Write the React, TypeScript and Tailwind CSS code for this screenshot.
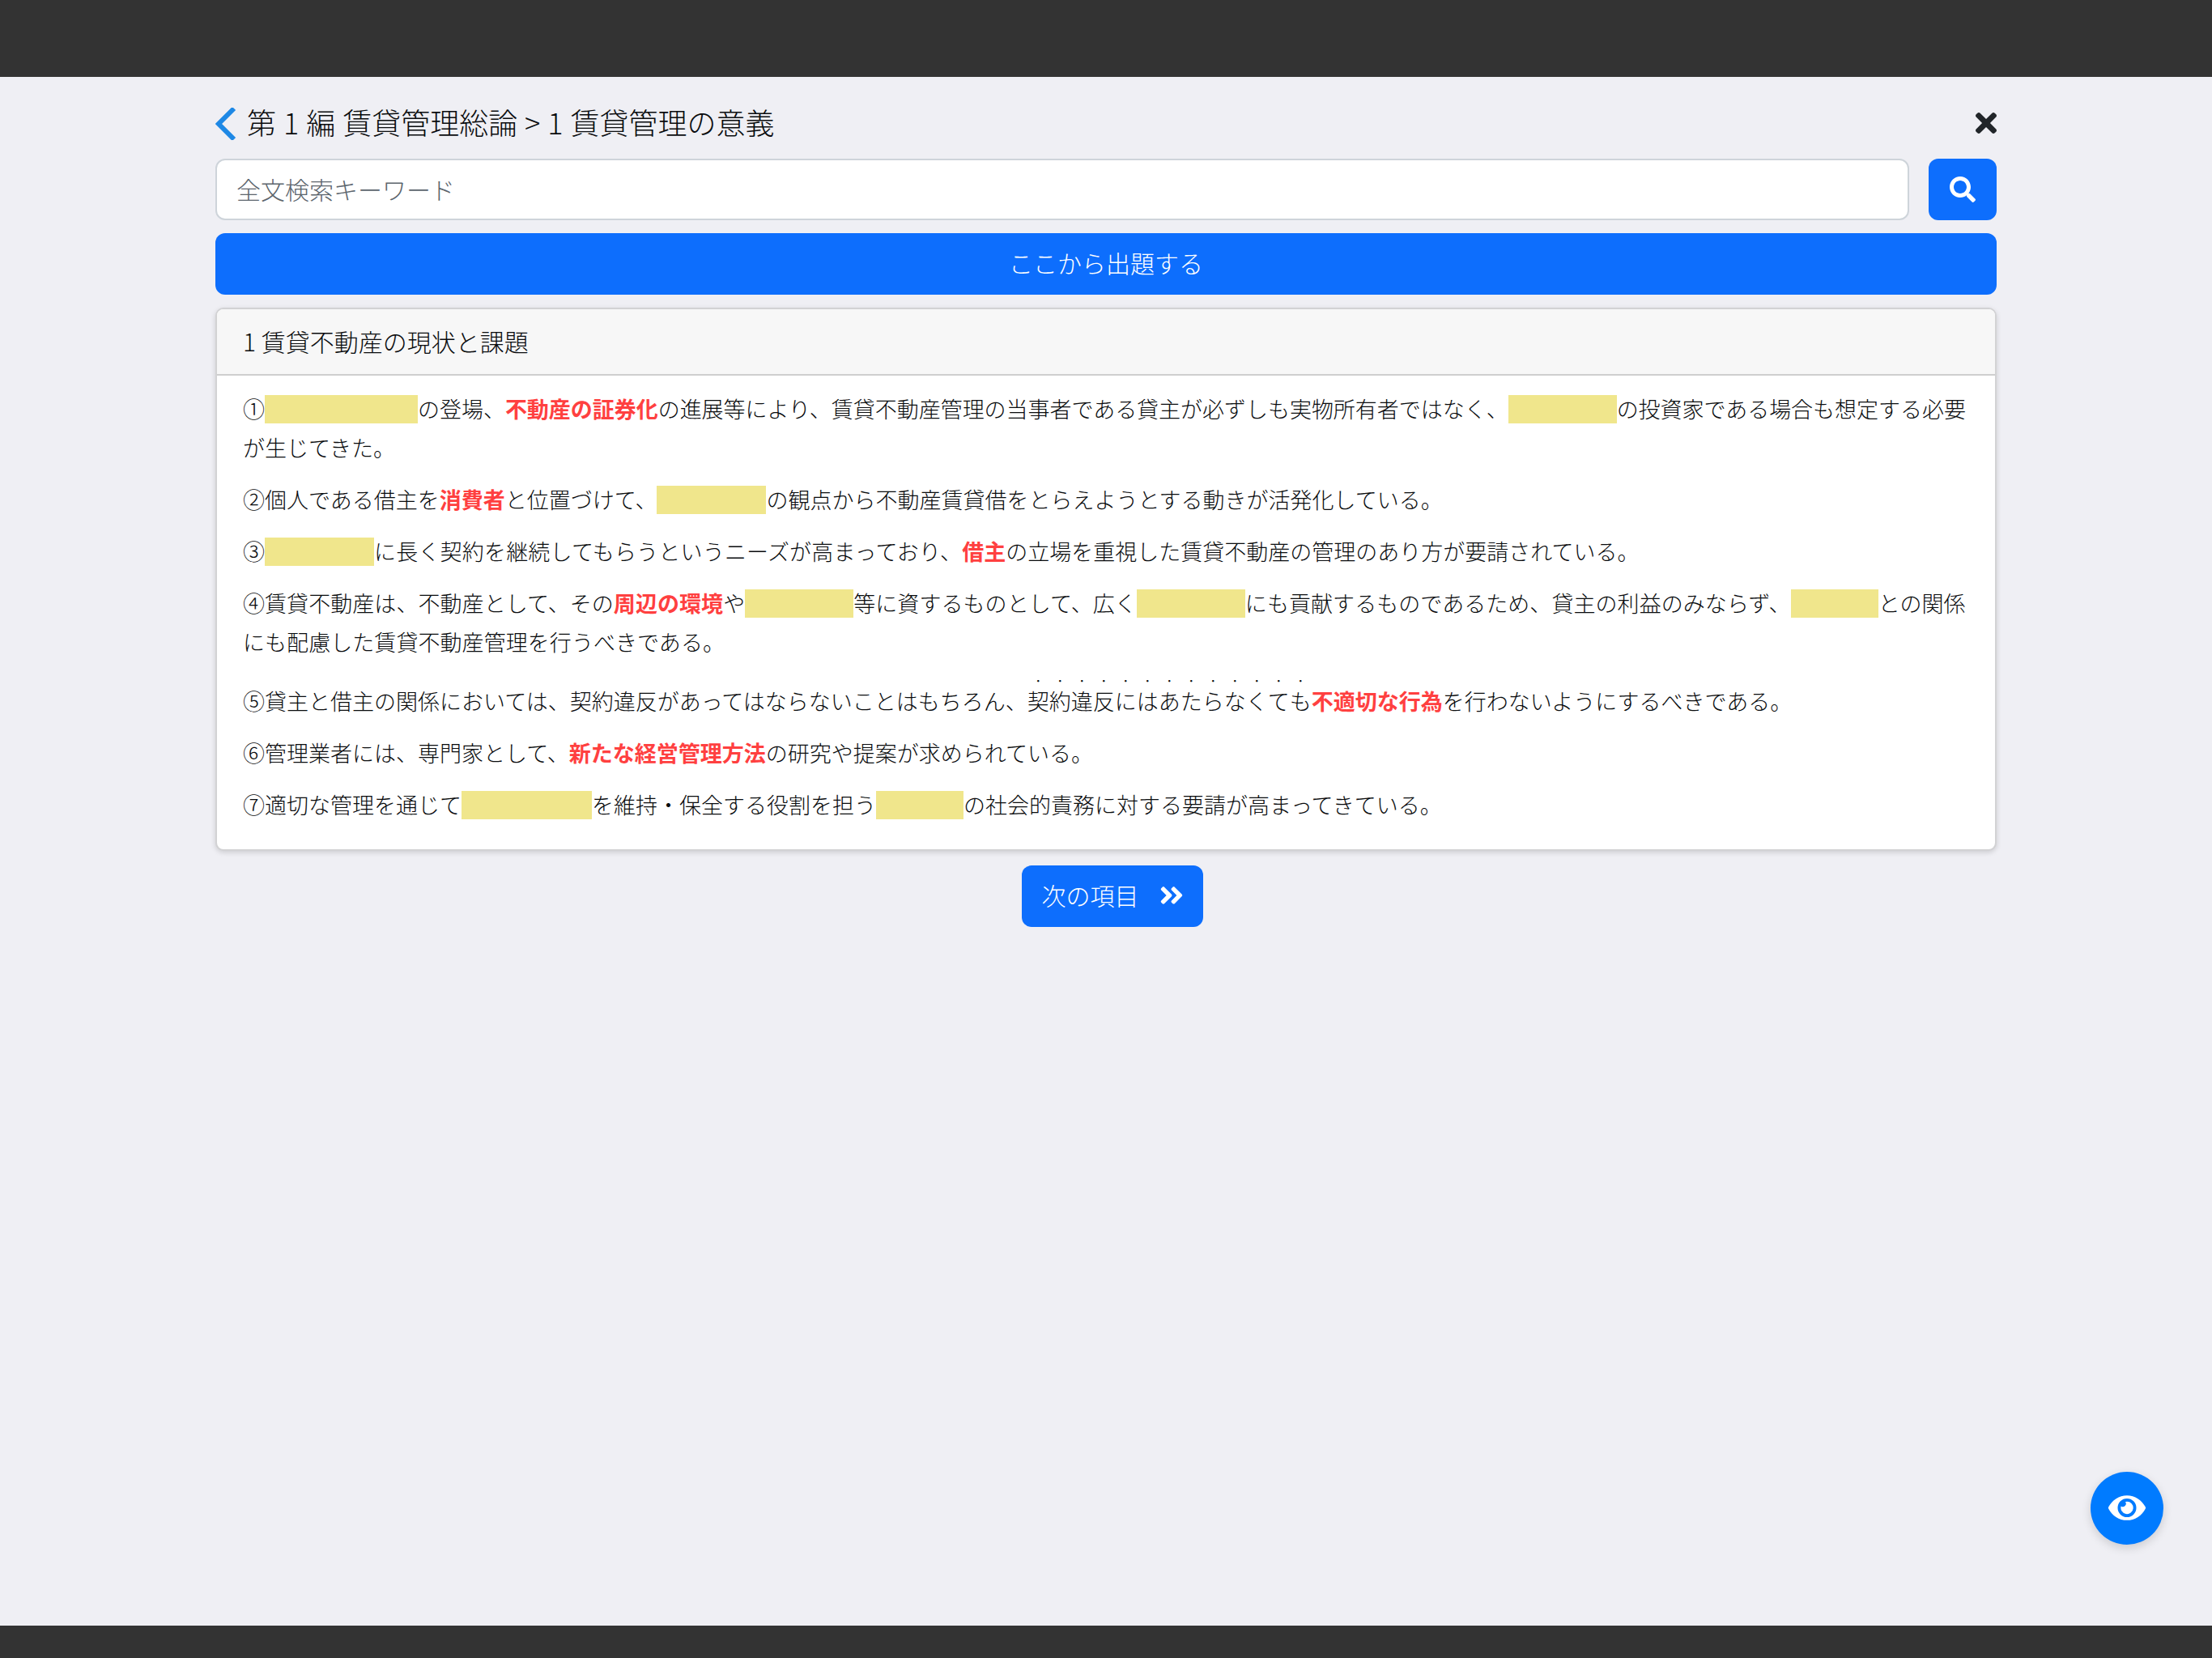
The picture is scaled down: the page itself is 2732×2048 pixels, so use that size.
import { FaAngleDoubleRight, FaEye, FaSearch, FaTimes } from "react-icons/fa";

function Blank({ w }: { w: string }) {
  return <span className={`mb-[5px] inline-block h-[35px] -translate-y-[1px] bg-[#f0e68c] align-middle ${w}`} />;
}

function Em({ children }: { children: string }) {
  return <span className="font-bold text-[#ff4040]">{children}</span>;
}

const DOTTED = "契約違反にはあたらなくても".split("");

export default function App() {
  return (
    <div className="relative flex h-screen w-full flex-col overflow-hidden bg-[#efeff4] font-['Noto_Sans_CJK_JP','Noto_Sans',sans-serif] text-[#0a0c0e]">
      <div className="h-[95px] shrink-0 bg-[#333333]" />

      <main className="mx-auto w-[2200px] flex-1 pt-[38px]">
        {/* Title */}
        <div className="mb-[23px] flex h-[40px] items-center">
          <svg width="26" height="40" viewBox="0 0 26 40" className="mr-[13px] shrink-0">
            <polyline points="23,1 4,20 23,39" fill="none" stroke="#1e88e5" strokeWidth="6" />
          </svg>
          <h1 className="flex-1 pb-[6px] text-[36px] leading-[40px] font-light [word-spacing:1px]">第 1 編 賃貸管理総論 &gt; 1 賃貸管理の意義</h1>
          <FaTimes className="mb-[3px] h-[38px] w-[26px] text-[#212529]" />
        </div>

        {/* Search */}
        <div className="flex gap-[24px]">
          <input
            placeholder="全文検索キーワード"
            className="h-[76px] flex-1 rounded-[12px] border-2 border-[#ced4da] bg-white px-[24px] pb-[3px] text-[30px] font-light outline-none placeholder:text-[#5c656d]"
          />
          <button className="flex h-[76px] w-[84px] items-center justify-center rounded-[12px] bg-[#0d6efd] text-white">
            <FaSearch className="h-[32px] w-[32px]" />
          </button>
        </div>

        <button className="mt-[16px] h-[76px] w-full rounded-[12px] bg-[#0d6efd] pb-[3px] text-[30px] font-light text-white">
          ここから出題する
        </button>

        {/* Card */}
        <section className="mt-[16px] overflow-hidden rounded-[10px] border-2 border-[#d2d2d4] bg-white shadow-[0_2px_6px_rgba(0,0,0,0.15)]">
          <div className="flex h-[82px] items-center border-b-2 border-[#cfcfcf] bg-[#f7f7f7] px-[32px] pb-[2px] text-[30px] font-light">
            1 賃貸不動産の現状と課題
          </div>
          <div className="px-[32px] pt-[17px] pb-[15px] text-[27px] leading-[48px] font-light">
            <p className="mb-[16px] tracking-[-0.03px]">
              ①<Blank w="w-[189px]" />の登場、<Em>不動産の証券化</Em>の進展等により、賃貸不動産管理の当事者である貸主が必ずしも実物所有者ではなく、<Blank w="w-[134px]" />の投資家である場合も想定する必要が生じてきた。
            </p>
            <p className="mb-[16px]">
              ②個人である借主を<Em>消費者</Em>と位置づけて、<Blank w="w-[135px]" />の観点から不動産賃貸借をとらえようとする動きが活発化している。
            </p>
            <p className="mb-[16px]">
              ③<Blank w="w-[135px]" /><span className="tracking-[0.19px]">に長く契約を継続してもらうというニーズが高まっており、</span><Em>借主</Em>の立場を重視した賃貸不動産の管理のあり方が要請されている。
            </p>
            <p className="mb-[16px] tracking-[0.06px]">
              ④賃貸不動産は、不動産として、その<Em>周辺の環境</Em>や<Blank w="w-[134px]" />等に資するものとして、広く<Blank w="w-[134px]" />にも貢献するものであるため、貸主の利益のみならず、<Blank w="w-[108px]" />との関係にも配慮した賃貸不動産管理を行うべきである。
            </p>
            <p className="mb-[16px] pt-[9px]">
              ⑤貸主と借主の関係においては、契約違反があってはならないことはもちろん、
              {DOTTED.map((c, i) => (
                <ruby key={i}>
                  {c}
                  <rt className="relative -top-[5px] text-[13px] leading-[21px]">・</rt>
                </ruby>
              ))}
              <Em>不適切な行為</Em>を行わないようにするべきである。
            </p>
            <p className="mb-[16px]">
              ⑥管理業者には、専門家として、<Em>新たな経営管理方法</Em>の研究や提案が求められている。
            </p>
            <p className="mb-[16px]">
              ⑦適切な管理を通じて<Blank w="w-[161px]" />を維持・保全する役割を担う<Blank w="w-[108px]" />の社会的責務に対する要請が高まってきている。
            </p>
          </div>
        </section>

        <div className="mt-[18px] flex justify-center pl-[16px]">
          <button className="flex h-[76px] w-[224px] items-center justify-center gap-[25px] rounded-[12px] bg-[#0d6efd] pb-[3px] text-[30px] font-light text-white">
            次の項目
            <FaAngleDoubleRight className="h-[34px] w-[30px]" />
          </button>
        </div>
      </main>

      <div className="h-[40px] shrink-0 bg-[#333333]" />

      {/* Floating eye button */}
      <button className="absolute top-[1818px] left-[2582px] flex h-[90px] w-[90px] items-center justify-center rounded-full bg-[#007bff] pb-[2px] text-white shadow-[0_4px_12px_rgba(0,0,0,0.15)]">
        <FaEye className="h-[41px] w-[46px]" />
      </button>
    </div>
  );
}
